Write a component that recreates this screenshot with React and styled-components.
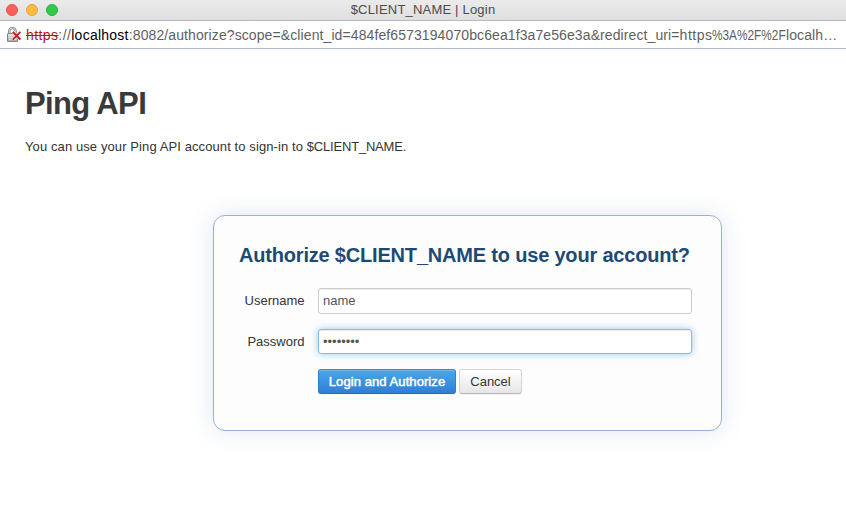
import React from "react";
import styled, { createGlobalStyle } from "styled-components";

const GlobalStyle = createGlobalStyle`
  * { box-sizing: border-box; }
  body {
    margin: 0;
    background: #fff;
    color: #333;
    font-family: "Liberation Sans", Arial, sans-serif;
    font-size: 13px;
    overflow: hidden;
  }
`;

const Window = styled.div`
  display: flex;
  flex-direction: column;
  width: 846px;
  height: 523px;
  overflow: hidden;
`;

const TitleBar = styled.header`
  display: grid;
  grid-template-columns: 1fr auto 1fr;
  align-items: center;
  height: 21px;
  padding: 0 6px;
  background: linear-gradient(#ebebeb, #dfdfdf);
  border-bottom: 1px solid #b5b9c2;
`;

const Lights = styled.div`
  display: flex;
  gap: 8px;
`;

const Light = styled.span`
  width: 12px;
  height: 12px;
  border-radius: 50%;
  background: ${(p) => p.$fill};
  border: 1px solid ${(p) => p.$edge};
`;

const WindowTitle = styled.div`
  color: #4b4b4b;
  font-size: 13px;
  line-height: 18px;
  letter-spacing: 0.2px;
  white-space: nowrap;
`;

const AddressBar = styled.div`
  display: flex;
  align-items: center;
  height: 28px;
  padding: 0 0 0 6px;
  border-bottom: 1px solid #b4bccb;
  background: #fff;
`;

const Url = styled.div`
  margin-left: 5px;
  color: #5f5f5f;
  font-size: 14px;
  line-height: 20px;
  white-space: nowrap;
  letter-spacing: 0.1px;
`;

const Scheme = styled.s`
  color: #b9151b;
  letter-spacing: 0.4px;
`;

const Host = styled.span`
  color: #000;
  letter-spacing: 0.25px;
`;

const UrlPart = styled.span`
  letter-spacing: ${(p) => p.$spacing};
`;

const Escapes = styled.span`
  display: inline-block;
  width: 73.5px;
  letter-spacing: 0;
  transform: scaleX(0.845);
  transform-origin: left;
`;

const Content = styled.main`
  display: flex;
  flex-direction: column;
  padding: 37px 25px 0;
`;

const PageTitle = styled.h1`
  margin: 0;
  color: #3a3a3a;
  font-size: 31px;
  line-height: 36px;
  font-weight: bold;
  letter-spacing: -0.65px;
`;

const Intro = styled.p`
  margin: 15px 0 0;
  line-height: 20px;
  color: #333;
  letter-spacing: 0.1px;
  white-space: nowrap;
`;

const ClientName = styled.span`
  letter-spacing: -0.2px;
`;

const Card = styled.section`
  width: 509px;
  height: 216px;
  margin: 58px 0 0 188px;
  padding: 24px 29px 0 25px;
  border: 1px solid #97b0d3;
  border-radius: 12px;
  background: #fdfdfd;
  box-shadow: 0 0 25px rgba(80, 120, 180, 0.18);
`;

const CardTitle = styled.h2`
  margin: 0;
  color: #1d4a75;
  font-size: 20px;
  line-height: 30px;
  letter-spacing: -0.19px;
  white-space: nowrap;
`;

const Form = styled.form`
  display: grid;
  grid-template-columns: 65.5px 374px;
  column-gap: 13.5px;
  row-gap: 15px;
  margin-top: 18px;
`;

const Label = styled.label`
  text-align: right;
  line-height: 25px;
`;

const Input = styled.input`
  width: 374px;
  height: 26px;
  padding: 0 4px 1px;
  border: 1px solid ${(p) => (p.$active ? "#80bdeb" : "#ccc")};
  border-radius: 3px;
  outline: none;
  background: #fff;
  color: #555;
  font: 13px "Liberation Sans", Arial, sans-serif;
  box-shadow: inset 0 1px 1px rgba(0, 0, 0, 0.075)
    ${(p) => (p.$active ? ", 0 0 7px rgba(82, 168, 236, 0.6)" : "")};
`;

const PasswordInput = styled(Input)`
  height: 25px;
  padding-bottom: 0;
`;

const Actions = styled.div`
  display: flex;
  grid-column: 2;
  gap: 3px;
`;

const Button = styled.button`
  width: 63px;
  height: 25px;
  padding: 0 0 1px;
  border: 1px solid #d5d5d5;
  border-bottom-color: #b5b5b5;
  border-radius: 3px;
  background: linear-gradient(#fff, #e6e6e6);
  color: #333;
  font: 13px "Liberation Sans", Arial, sans-serif;
  white-space: nowrap;
  text-shadow: 0 1px 1px rgba(255, 255, 255, 0.75);
  box-shadow: inset 0 1px 0 rgba(255, 255, 255, 0.2), 0 1px 2px rgba(0, 0, 0, 0.05);
`;

const PrimaryButton = styled(Button)`
  width: 138px;
  border-color: #348bce #3180c9 #2a6fb8;
  background: linear-gradient(#49a8e8, #2f7ed8);
  color: #fff;
  letter-spacing: 0.08px;
  -webkit-text-stroke: 0.5px #fff;
  text-shadow: 0 -1px 0 rgba(0, 0, 0, 0.18);
`;

function BrokenLock() {
  return (
    <svg width="15" height="16" viewBox="0 0 15 16" fill="none">
      <defs>
        <linearGradient id="lock" x1="0" y1="0" x2="0" y2="1">
          <stop offset="0" stopColor="#e4e4e4" />
          <stop offset="1" stopColor="#a5a5a5" />
        </linearGradient>
      </defs>
      <path d="M3.2 8V4.2a3.2 3.2 0 0 1 6.4 0V8" stroke="#858585" strokeWidth="2.4" />
      <path d="M3.2 8V4.2a3.2 3.2 0 0 1 6.4 0V8" stroke="#d8d8d8" strokeWidth="1" />
      <rect x="1.5" y="6.5" width="10" height="8" rx="0.5" fill="url(#lock)" stroke="#858585" />
      <path d="M2.5 8.5h8M2.5 10.5h8M2.5 12.5h8" stroke="#f0f0f0" strokeWidth="0.6" />
      <path d="M6.8 4.8l7.6 7.8M14.4 4.8L6.8 12.6" stroke="#fff" strokeOpacity="0.8" strokeWidth="2.9" />
      <path d="M6.8 4.8l7.6 7.8M14.4 4.8L6.8 12.6" stroke="#c9181e" strokeWidth="1.9" />
    </svg>
  );
}

export default function App() {
  return (
    <>
      <GlobalStyle />
      <Window>
        <TitleBar>
          <Lights>
            <Light $fill="#fc605c" $edge="#e9504d" />
            <Light $fill="#fdbc40" $edge="#e5a436" />
            <Light $fill="#34c84a" $edge="#2bae3c" />
          </Lights>
          <WindowTitle>$CLIENT_NAME | Login</WindowTitle>
        </TitleBar>
        <AddressBar>
          <BrokenLock />
          <Url>
            <Scheme>https</Scheme>
            <UrlPart $spacing="0.4px">://</UrlPart>
            <Host>localhost</Host>
            :8082/authorize?scope=&amp;client_id=484fef6573194070bc6ea1f3a7e56e3a&amp;redirect_uri=
            <UrlPart $spacing="0.5px">https</UrlPart>
            <Escapes>%3A%2F%2F</Escapes>
            localh…
          </Url>
        </AddressBar>
        <Content>
          <PageTitle>Ping API</PageTitle>
          <Intro>
            You can use your Ping API account to sign-in to <ClientName>$CLIENT_NAME.</ClientName>
          </Intro>
          <Card>
            <CardTitle>Authorize $CLIENT_NAME to use your account?</CardTitle>
            <Form>
              <Label htmlFor="username">Username</Label>
              <Input id="username" type="text" defaultValue="name" />
              <Label htmlFor="password">Password</Label>
              <PasswordInput id="password" type="password" defaultValue="password" $active />
              <Actions>
                <PrimaryButton type="button">Login and Authorize</PrimaryButton>
                <Button type="button">Cancel</Button>
              </Actions>
            </Form>
          </Card>
        </Content>
      </Window>
    </>
  );
}
